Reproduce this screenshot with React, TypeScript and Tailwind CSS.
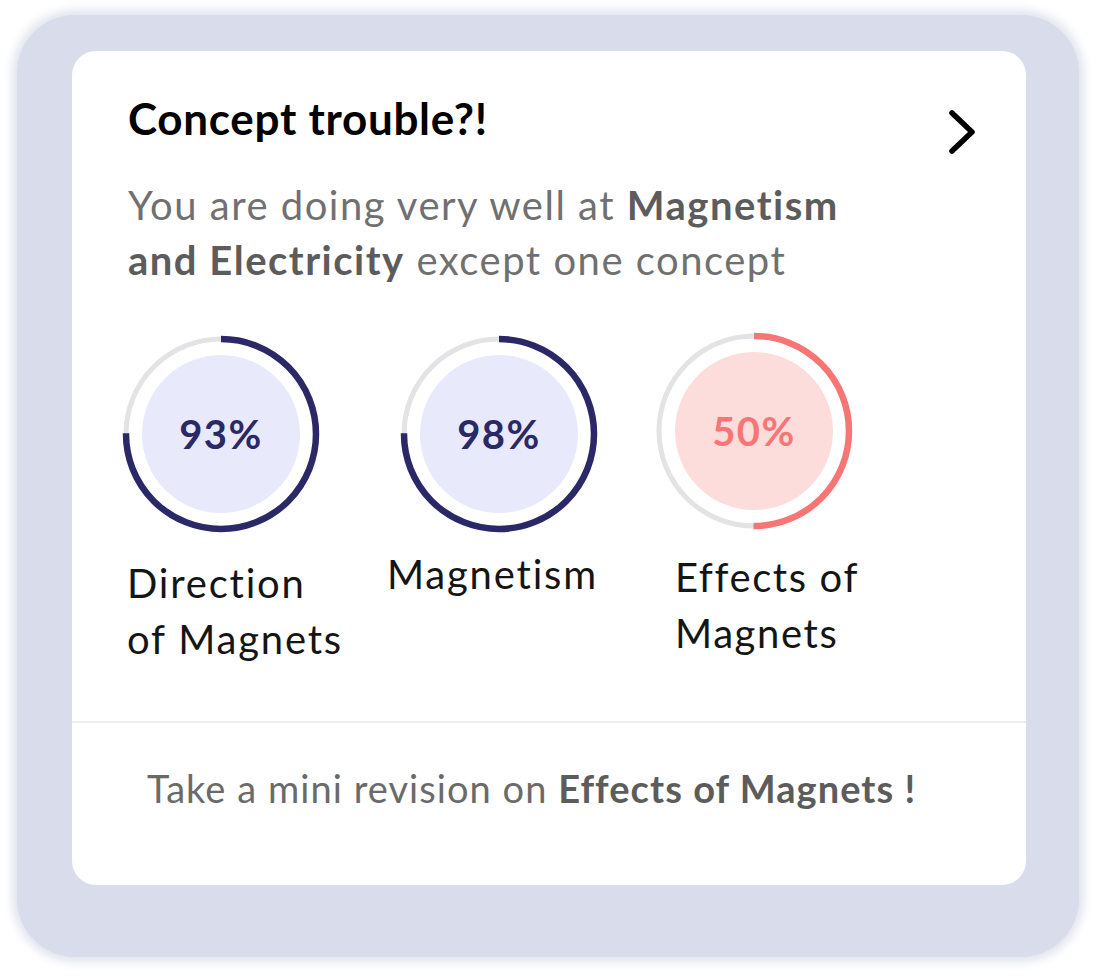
import React from "react";

function Ring({
  pct,
  color,
  fill,
  textColor,
  label,
}: {
  pct: number;
  color: string;
  fill: string;
  textColor: string;
  label: string;
}) {
  const r = 95;
  const c = 2 * Math.PI * r;
  return (
    <div className="relative w-[198px] h-[198px]">
      <svg width="198" height="198" viewBox="0 0 198 198" className="absolute inset-0">
        <circle cx="99" cy="99" r={r} fill="none" stroke="#e3e3e6" strokeWidth="5" />
        <circle
          cx="99"
          cy="99"
          r={r}
          fill="none"
          stroke={color}
          strokeWidth="6.5"
          strokeDasharray={`${c * pct} ${c}`}
          transform="rotate(-90 99 99)"
        />
        <circle cx="99" cy="99" r="79" fill={fill} />
      </svg>
      <div
        className="absolute inset-0 flex items-center justify-center text-[40px] font-bold tracking-[1.5px]"
        style={{ color: textColor }}
      >
        {label}
      </div>
    </div>
  );
}

export default function App() {
  return (
    <div
      className="w-[1098px] h-[978px] bg-white pt-[15px] pl-[17px]"
      style={{ fontFamily: "Lato, 'Noto Sans', sans-serif" }}
    >
      <div className="w-[1062px] h-[942px] rounded-[58px] bg-[#d9dcea] shadow-[0_0_10px_5px_#e2e4ef] pt-[36px] pl-[55px]">
        <div className="w-[954px] h-[834px] rounded-[24px] bg-white flex flex-col overflow-hidden">
          <div className="h-[670px] pl-[56px] pr-[48px] pt-[41px]">
            <div className="flex justify-between items-start">
              <h1 className="text-[44px] leading-[53px] font-bold text-black tracking-[0.7px]">Concept trouble?!</h1>
              <svg width="32" height="48" viewBox="0 0 32 48" className="mt-[16px]">
                <path
                  d="M6 5 L26 24 L6 43"
                  fill="none"
                  stroke="#000"
                  strokeWidth="5.5"
                  strokeLinecap="round"
                  strokeLinejoin="round"
                />
              </svg>
            </div>
            <p className="mt-[22px] text-[40px] leading-[55px] text-[#707070] tracking-[1.5px]">
              You are doing very well at <span className="font-bold text-[#5c5c5c]">Magnetism</span>
              <br />
              <span className="font-bold text-[#5c5c5c]">and Electricity</span> except one concept
            </p>
            <div className="mt-[45px] flex -ml-[6px]">
              <div className="w-[265px] flex flex-col">
                <div className="mt-[2px]">
                  <Ring pct={0.75} color="#2b2868" fill="#e8eafb" textColor="#2b2868" label="93%" />
                </div>
                <div className="mt-[22px] ml-[5px] text-[40px] leading-[56px] text-[#151515] tracking-[1.8px]">
                  Direction
                  <br />
                  of Magnets
                </div>
              </div>
              <div className="w-[268px] flex flex-col">
                <div className="mt-[2px] ml-[13px]">
                  <Ring pct={0.75} color="#2b2868" fill="#e8eafb" textColor="#2b2868" label="98%" />
                </div>
                <div className="mt-[13px] text-[40px] leading-[56px] text-[#151515] tracking-[1.8px]">Magnetism</div>
              </div>
              <div className="flex flex-col">
                <div className="-mt-[1px]">
                  <Ring pct={0.5} color="#f77574" fill="#fddcdc" textColor="#f77574" label="50%" />
                </div>
                <div className="mt-[19px] ml-[20px] text-[40px] leading-[56px] text-[#151515] tracking-[1.6px]">
                  Effects of
                  <br />
                  Magnets
                </div>
              </div>
            </div>
          </div>
          <div className="h-[2px] bg-[#ececee]" />
          <div className="pl-[75px] pt-[42px] text-[38px] leading-[46px] text-[#6a6a6a] tracking-[1.05px]">
            Take a mini revision on <span className="font-bold text-[#5c5c5c]">Effects of Magnets !</span>
          </div>
        </div>
      </div>
    </div>
  );
}
